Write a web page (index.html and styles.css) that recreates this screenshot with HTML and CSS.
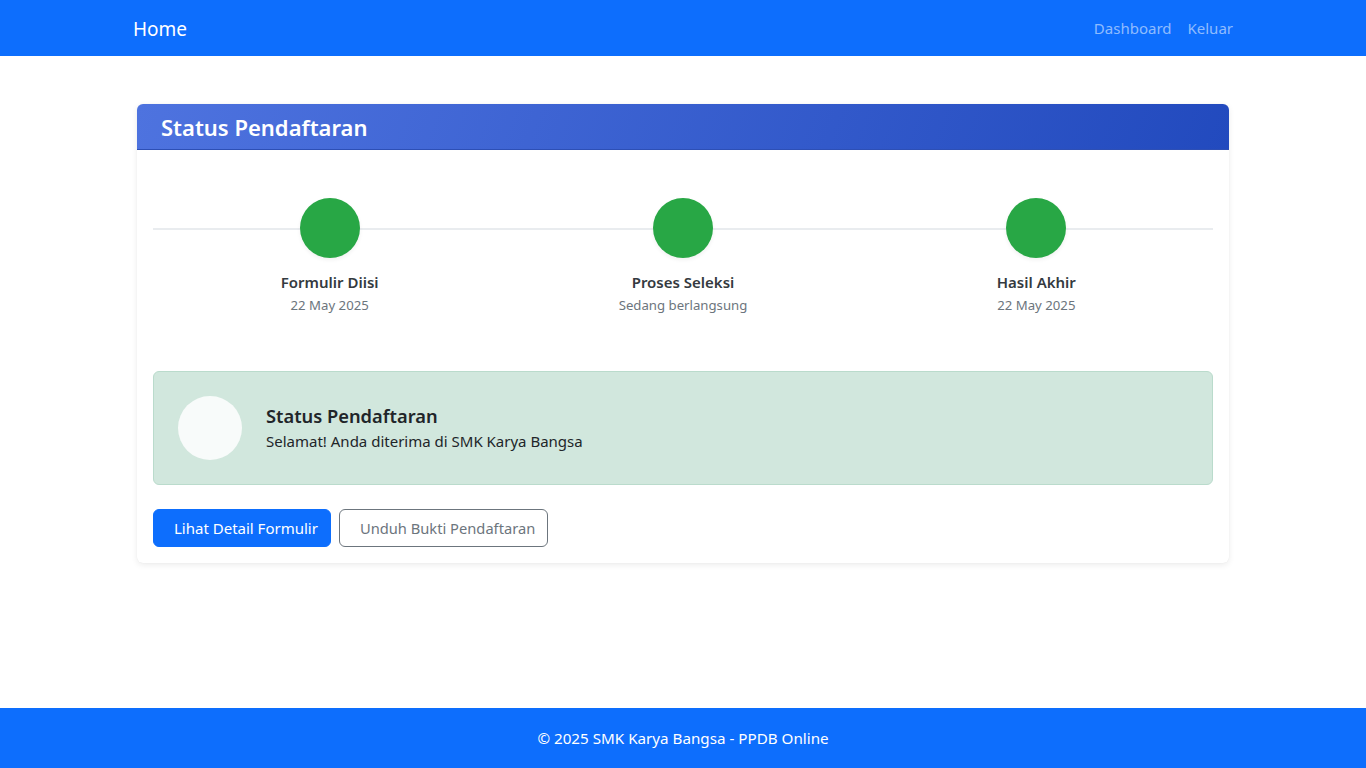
FILE: index.html
```html
<!DOCTYPE html>
<html lang="id">
<head>
<meta charset="utf-8">
<title>Status Pendaftaran</title>
<link rel="stylesheet" href="styles.css">
</head>
<body>
<nav class="navbar">
  <div class="container nav-inner">
    <a class="brand" href="#">Home</a>
    <div class="nav-links">
      <a class="nav-link" href="#">Dashboard</a>
      <a class="nav-link" href="#">Keluar</a>
    </div>
  </div>
</nav>
<main class="container main">
  <div class="card">
    <div class="card-header">
      <h4 class="card-title">Status Pendaftaran</h4>
    </div>
    <div class="card-body">
      <div class="timeline">
        <div class="step">
          <div class="dot"></div>
          <div class="step-title">Formulir Diisi</div>
          <div class="step-sub">22 May 2025</div>
        </div>
        <div class="step">
          <div class="dot"></div>
          <div class="step-title">Proses Seleksi</div>
          <div class="step-sub">Sedang berlangsung</div>
        </div>
        <div class="step">
          <div class="dot"></div>
          <div class="step-title">Hasil Akhir</div>
          <div class="step-sub">22 May 2025</div>
        </div>
      </div>
      <div class="alert">
        <div class="alert-icon"></div>
        <div class="alert-text">
          <h5 class="alert-title">Status Pendaftaran</h5>
          <p class="alert-msg">Selamat! Anda diterima di SMK Karya Bangsa</p>
        </div>
      </div>
      <div class="actions">
        <a class="btn btn-primary" href="#">Lihat Detail Formulir</a>
        <a class="btn btn-outline" href="#">Unduh Bukti Pendaftaran</a>
      </div>
    </div>
  </div>
</main>
<footer class="footer">© 2025 SMK Karya Bangsa - PPDB Online</footer>
</body>
</html>
```
FILE: styles.css
```css
* { box-sizing: border-box; }
html, body { margin: 0; padding: 0; }
body {
  font-family: "Noto Sans", "Open Sans", sans-serif;
  font-size: 16px;
  line-height: 1.5;
  color: #212529;
  background: #fff;
  min-height: 100vh;
  display: flex;
  flex-direction: column;
}
a { text-decoration: none; }
.container {
  width: 1140px;
  margin: 0 auto;
  padding: 0 12px;
}
.navbar {
  background: #0d6efd;
  height: 56px;
}
.nav-inner {
  height: 56px;
  display: flex;
  align-items: center;
  justify-content: space-between;
}
.brand {
  color: #fff;
  font-size: 19px;
  padding-left: 8px;
  padding-top: 3px;
}
.nav-links { display: flex; }
.nav-link {
  color: rgba(255,255,255,0.55);
  font-size: 15px;
  padding: 8px 8px;
}
.main {
  margin-top: 48px;
  padding: 0 24px;
}
.card {
  background: #fff;
  border-radius: 6px;
  box-shadow: 0 2px 6px rgba(0,0,0,0.08), 0 0 1px rgba(0,0,0,0.08);
  overflow: hidden;
}
.card-header {
  height: 46px;
  padding: 0 24px;
  display: flex;
  align-items: center;
  background: linear-gradient(110deg, #4e73df 0%, #224abe 100%);
  border-bottom: 1px solid #2d4fb5;
}
.card-title {
  margin: 0;
  padding-top: 2px;
  color: #fff;
  font-size: 22px;
  font-weight: 600;
  line-height: 1.2;
}
.card-body {
  padding: 16px;
}
.timeline {
  display: grid;
  grid-template-columns: 1fr 1fr 1fr;
  padding-top: 32px;
  margin-bottom: 56px;
  background: linear-gradient(#e9ecef, #e9ecef) no-repeat 0 62px / 100% 2px;
}
.step {
  display: flex;
  flex-direction: column;
  align-items: center;
}
.dot {
  width: 60px;
  height: 60px;
  border-radius: 50%;
  background: #28a745;
  box-shadow: 0 2px 4px rgba(0,0,0,0.06);
}
.step-title {
  margin-top: 12px;
  font-weight: 600;
  font-size: 15px;
  color: #343a40;
  line-height: 24px;
}
.step-sub {
  margin-top: 1px;
  font-size: 13.2px;
  color: #6c757d;
  line-height: 20px;
}
.alert {
  display: flex;
  align-items: center;
  gap: 24px;
  padding: 24px;
  background: #d1e7dd;
  border: 1px solid #badbcc;
  border-radius: 6px;
}
.alert-icon {
  width: 64px;
  height: 64px;
  border-radius: 50%;
  background: #f8fbfa;
  flex: none;
}
.alert-text { padding-top: 2px; }
.alert-title {
  margin: 0 0 3px;
  font-size: 18.3px;
  font-weight: 600;
  line-height: 1.2;
  color: #212529;
}
.alert-msg {
  margin: 0;
  font-size: 15px;
  color: #212529;
}
.actions {
  margin-top: 24px;
  display: flex;
  gap: 8px;
}
.btn {
  display: inline-flex;
  align-items: center;
  height: 38px;
  padding: 0 12px 0 20px;
  border-radius: 6px;
  font-size: 15px;
  border: 1px solid transparent;
}
.btn-primary {
  background: #0d6efd;
  color: #fff;
  border-color: #0d6efd;
}
.btn-outline {
  font-size: 14.7px;
  color: #6c757d;
  border-color: #6c757d;
  background: #fff;
}
.footer {
  margin-top: auto;
  background: #0d6efd;
  color: #fff;
  height: 60px;
  display: flex;
  align-items: center;
  justify-content: center;
  font-size: 15.2px;
}
```
